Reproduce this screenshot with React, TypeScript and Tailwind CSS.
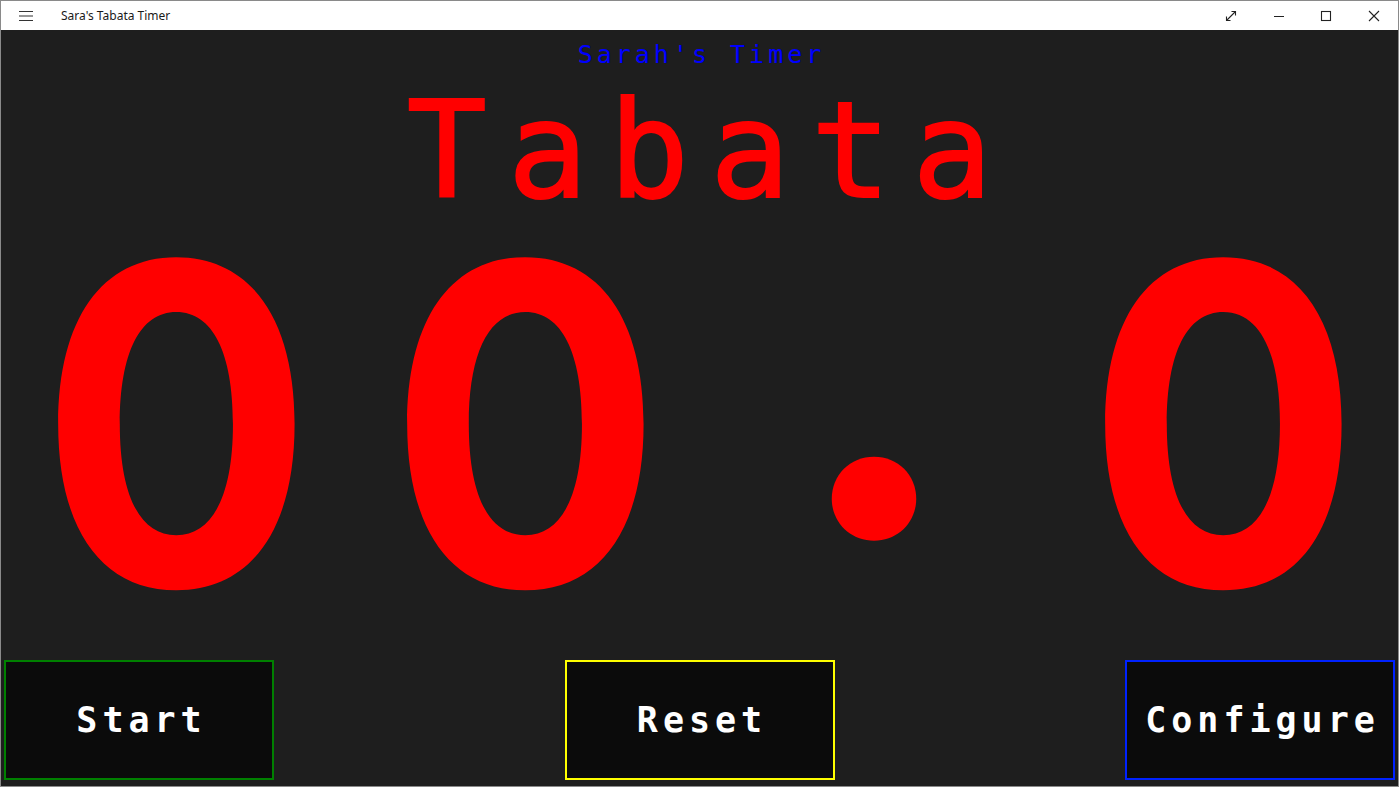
import React from "react";

const mono = { fontFamily: '"DejaVu Sans Mono", "Liberation Mono", monospace' };
const digitFont = { fontFamily: 'Inter, "Liberation Sans", sans-serif' };

function TitleBar() {
  return (
    <div className="flex h-[29px] items-center bg-white text-[#1a1a1a]">
      <div className="flex w-[48px] justify-center pl-[2px]">
        <svg width="16" height="12" viewBox="0 0 16 12" className="text-[#333]">
          <path d="M1 1.5h14M1 6h14M1 10.5h14" stroke="currentColor" strokeWidth="1.2" />
        </svg>
      </div>
      <div
        className="ml-[12px] flex-1 text-[12px]"
        style={{ fontFamily: '"Noto Sans", "Open Sans", sans-serif' }}
      >
        Sara's Tabata Timer
      </div>
      <div className="flex h-full items-center">
        <div className="flex h-full w-[48px] items-center justify-center">
          <svg width="12" height="12" viewBox="0 0 12 12" fill="none" stroke="#222" strokeWidth="1.1">
            <path d="M1.5 10.5l9-9" />
            <path d="M6.5 1.5h4v4" />
            <path d="M1.5 6.5v4h4" />
          </svg>
        </div>
        <div className="flex h-full w-[47px] items-center justify-center">
          <svg width="12" height="12" viewBox="0 0 12 12" fill="none" stroke="#222" strokeWidth="1">
            <path d="M1 6.5h10" />
          </svg>
        </div>
        <div className="flex h-full w-[48px] items-center justify-center">
          <svg width="12" height="12" viewBox="0 0 12 12" fill="none" stroke="#222" strokeWidth="1.1">
            <rect x="1.5" y="1.5" width="9" height="9" />
          </svg>
        </div>
        <div className="flex h-full w-[48px] items-center justify-center">
          <svg width="12" height="12" viewBox="0 0 12 12" fill="none" stroke="#222" strokeWidth="1.1">
            <path d="M1 1l10 10M11 1L1 11" />
          </svg>
        </div>
      </div>
    </div>
  );
}

function ActionButton({ label, border }: { label: string; border: string }) {
  return (
    <button
      className={`flex h-[120px] w-[270px] items-center justify-center border-2 bg-[#0b0b0b] pl-[5px] text-[35px] font-bold leading-[40px] tracking-[5px] text-white ${border}`}
      style={mono}
    >
      {label}
    </button>
  );
}

export default function App() {
  const digits = ["0", "0", ".", "0"];
  return (
    <div className="flex h-[787px] w-[1399px] flex-col overflow-hidden border border-[#8a8a8a] bg-[#1e1e1e]">
      <TitleBar />
      <div className="flex flex-1 flex-col items-center bg-[#1e1e1e]">
        <div
          className="mt-[12px] h-[25px] pl-[4px] text-[25px] leading-[25px] tracking-[4px] text-[#0000ff]"
          style={mono}
        >
          Sarah's Timer
        </div>
        <div
          className="mt-[29px] h-[110px] pl-[21px] text-[133px] leading-[110px] tracking-[21px] text-[#ff0000] [-webkit-text-stroke:2px_#ff0000]"
          style={mono}
        >
          Tabata
        </div>
        <div className="mt-[48px] flex h-[340px] w-full justify-center">
          {digits.map((d, i) => (
            <div key={i} className="flex w-[349px] items-center justify-center">
              {d === "." ? (
                <span
                  className="mb-[139px] text-[500px] font-bold leading-[340px] text-[#ff0000]"
                  style={digitFont}
                >
                  {d}
                </span>
              ) : (
                <span
                  className="inline-block scale-x-[0.91] text-[446px] font-bold leading-[340px] text-[#ff0000]"
                  style={digitFont}
                >
                  {d}
                </span>
              )}
            </div>
          ))}
        </div>
        <div className="mt-auto mb-[6px] flex w-full justify-between px-[3px]">
          <ActionButton label="Start" border="border-[#008000]" />
          <ActionButton label="Reset" border="border-[#ffff00]" />
          <ActionButton label="Configure" border="border-[#0022ff]" />
        </div>
      </div>
    </div>
  );
}
